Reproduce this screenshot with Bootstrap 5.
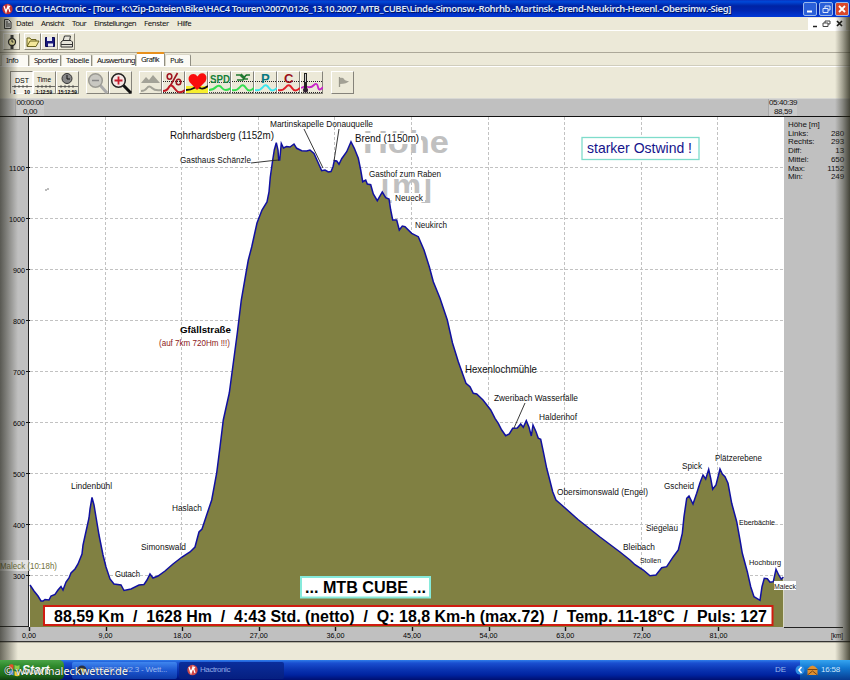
<!DOCTYPE html>
<html lang="de">
<head>
<meta charset="utf-8">
<title>CICLO HACtronic</title>
<link href="https://cdn.jsdelivr.net/npm/bootstrap@5.3.0/dist/css/bootstrap.min.css" rel="stylesheet">
<style>
body{width:850px;height:680px;overflow:hidden;background:#ece9d8;font:8px/1 "Liberation Sans",Arial,sans-serif;color:#111}
svg{display:block;flex:none}
.fit{white-space:nowrap;display:inline-block}
.titlebar{height:17px;background:linear-gradient(#0a35c0,#0048d8 10%,#0023a4 35%,#0026b0 60%,#0038d8);color:#dbe6f5;font-size:9.5px;padding:0 1px 0 2px}
.titlebar .fit{font-family:"Noto Sans","Liberation Sans",sans-serif;font-weight:600;text-shadow:1px 1px #001866}
.gap-title{margin-left:2px}
.wbtn{width:14px;height:14px;border:1px solid #9ab8ee;border-radius:2px;background:#2a5fd8}
.wclose{background:#d9482b}
.menubar{height:14px;border-bottom:1px solid #fff;padding:0 4px 0 4px}
.menubar,.tabs{font-family:"Noto Sans","Liberation Sans",sans-serif;font-size:7.8px}
.mdi{background:#fff;height:12px;width:38px}
.tools{height:22px;border-bottom:1px solid #aca899;padding:2px 2px 2px 3px}
.tbtn{width:17px;height:17px;border-right:1px solid #8d8a7c;border-bottom:1px solid #8d8a7c;border-left:1px solid #fff;border-top:1px solid #fff;flex:none}
.tabs{height:14px;border-bottom:1px solid #fff;box-shadow:inset 0 -1px #d0cdbd;padding-left:1px}
.tabx{background:#fbfaf4;border:1px solid #d8d5c5;border-right-color:#918f83;border-bottom:0;border-radius:2px 2px 0 0;height:12px;flex:none}
.tabx.active{height:14px;border-top:2px solid #e8901c;background:#fff}
.iconbar{height:31px;padding:4px 0 0 10px}
.gbtn{width:23px;height:23px;border-right:1px solid #85837a;border-bottom:1px solid #85837a;border-left:1px solid #fff;border-top:1px solid #fff;flex:none}
.gbtn.pressed{border-color:#85837a #fff #fff #85837a;background:#f6f4ec}
.gbtn.gapped{margin-left:7px}
.cursorbar{height:19px;background:#c0c0c0;border-bottom:1px solid #111;border-top:1px solid #d8d8d4;padding:0 53px 0 15px;line-height:8.5px}
.cellx{background:#cacaca;border-left:1px solid #aaa;width:29px;height:17px;text-align:center}
.plot{height:510px;background:#c0c0c0}
.plot>svg{overflow:visible;position:relative;z-index:1}
.stats{line-height:8.7px;padding:4px 6px 0 4px;font-size:8px;letter-spacing:-.1px}
.axisrow{height:15px;background:#c0c0c0;border-bottom:1px solid #333}
.rest{height:18px;border-top:1px solid #b5b2a3}
.taskbar{height:20px;background:linear-gradient(#2f7dea,#1a4fd0 15%,#0b36b4 45%,#0023a0 75%,#000f70);color:#9db9ec}
.start{width:64px;height:20px;background:linear-gradient(#4ba548,#2f8a2c 30%,#1e6b1c 75%,#103f10);border-radius:0 5px 5px 0;color:#fff;font-size:12px;font-style:italic;font-weight:bold}
.task{width:105px;height:17px;border-radius:2px;background:linear-gradient(#3f86ee,#1c56d0 50%,#0c3aa8)}
.task.cur{margin-left:2px;background:linear-gradient(#0a2e9c,#061f80);color:#8fa8e4}
.lang{margin-right:14px}
.tray{width:50px;height:20px;background:linear-gradient(#35a4f0,#1277d0 40%,#083c90);color:#cfe6fb}
.tray svg{margin-left:-5px}
.edgeL,.edgeR{top:17px;height:643px;pointer-events:none;z-index:3}
.edgeL{left:0;width:18px;background:linear-gradient(90deg,rgba(25,25,15,.62),rgba(50,50,40,.4) 45%,transparent)}
.edgeR{right:0;width:15px;background:linear-gradient(270deg,rgba(25,25,10,.75),rgba(50,50,35,.4) 50%,transparent)}
.copy{left:4px;bottom:3px;color:#fff;font:11px/1.1 "Noto Sans","Liberation Sans",sans-serif;z-index:4;text-shadow:0 0 1px #000}
</style>
<script src="https://cdn.jsdelivr.net/npm/bootstrap@5.3.0/dist/js/bootstrap.bundle.min.js"></script>
</head>
<body class="position-relative">
<header class="titlebar d-flex align-items-center">
  <svg width="11" height="12" viewBox="0 0 11 12"><circle cx="5.5" cy="6" r="5.2" fill="#c03030"/><path d="M2 3l2 6 2-6 2 6M3 8l5-5" stroke="#fff" fill="none" stroke-width="1.2"/></svg>
  <span class="fit gap-title me-auto" data-w="716">CICLO HACtronic - [Tour - K:\Zip-Dateien\Bike\HAC4 Touren\2007\0126_13.10.2007_MTB_CUBE\Linde-Simonsw.-Rohrhb.-Martinsk.-Brend-Neukirch-Hexenl.-Obersimw.-Sieg]</span>
  <div class="d-flex" style="gap:2px">
    <span class="wbtn"><svg width="12" height="12"><path d="M3 8.500h5" stroke="#fff" stroke-width="2"/></svg></span>
    <span class="wbtn"><svg width="12" height="12"><path d="M5 5V3h5v4H8M3 5.500h5v4H3z" stroke="#dfe8fa" fill="none"/></svg></span>
    <span class="wbtn wclose"><svg width="12" height="12"><path d="M3 3l6 6M9 3l-6 6" stroke="#fff" stroke-width="1.800"/></svg></span>
  </div>
</header>
<nav class="menubar d-flex align-items-center">
  <svg width="8" height="10" viewBox="0 0 8 10" class="me-1"><path d="M.5.5h4l2.500 2.500v6.500H.500zM2 3h2M2 5h4M2 7h4" stroke="#333" fill="#eee"/></svg>
  <div class="d-flex gap-2 me-auto">
    <span class="fit" data-w="17">Datei</span><span class="fit" data-w="23">Ansicht</span><span class="fit" data-w="14">Tour</span><span class="fit" data-w="42">Einstellungen</span><span class="fit" data-w="25">Fenster</span><span class="fit" data-w="14">Hilfe</span>
  </div>
  <div class="mdi"><svg width="38" height="12"><path d="M5 8.500h4" stroke="#222" stroke-width="1.500"/><path d="M17 5V3h5v3h-2M15 5h5v3.500h-5z" stroke="#444" fill="none"/><path d="M29 3l5 5M34 3l-5 5" stroke="#111" stroke-width="1.700"/></svg></div>
</nav>
<div class="tools d-flex">
  <span class="tbtn"><svg width="16" height="16"><path d="M8 1v14" stroke="#333" stroke-width="3"/><circle cx="8" cy="8" r="3.500" fill="#f0e9a0" stroke="#222" stroke-width="1.300"/><path d="M8 6v2h1.500" stroke="#222" fill="none"/></svg></span>
  <span class="tbtn ms-1"><svg width="16" height="16"><path d="M2 12V4h3l1 1.500h5V7M2 12.500L5 7h9l-3 5.500z" fill="#f3e79a" stroke="#6b6420"/></svg></span>
  <span class="tbtn"><svg width="16" height="16"><path d="M3.500 3.500h9v9h-9z" fill="#1a1a7c" stroke="#0a0a50"/><path d="M5 3h5v4H5zM6 9.500h5v3H6z" fill="#e9e9f2"/></svg></span>
  <span class="tbtn"><svg width="16" height="16"><path d="M4 7l1.500-5h6L10.500 7M2 8l2-1.500h8l1.500 1.500v5H2zM2 10.500h11" fill="#e6e4da" stroke="#333"/></svg></span>
</div>
<div class="tabs d-flex align-items-end" id="tabs"></div>
<div class="iconbar d-flex" id="iconbar">
  <span class="gbtn pressed"><svg width="22" height="22"><text x="4" y="11" font-size="8" textLength="14" lengthAdjust="spacingAndGlyphs">DST</text><path d="M1 14.500h20M4 13v3M8 13v3M12 13v3M16 13v3" stroke="#333" stroke-width=".7"/><text x="2" y="21.500" font-size="5.500" font-weight="bold">1</text><text x="13" y="21.500" font-size="5.500" font-weight="bold">10</text></svg></span>
  <span class="gbtn"><svg width="22" height="22"><text x="3" y="10" font-size="8" textLength="14" lengthAdjust="spacingAndGlyphs">Time</text><path d="M1 14.500h20M4 13v3M8 13v3M12 13v3M16 13v3" stroke="#333" stroke-width=".7"/><text x="2" y="21.500" font-size="5.800" font-weight="bold" textLength="16" lengthAdjust="spacingAndGlyphs">1:12:59</text></svg></span>
  <span class="gbtn"><svg width="22" height="22"><circle cx="10" cy="6.500" r="5" fill="#888" stroke="#333"/><path d="M10 3v4h3" stroke="#111" fill="none"/><path d="M1 14.500h20M4 13v3M8 13v3M12 13v3M16 13v3" stroke="#333" stroke-width=".7"/><text x="1" y="21.500" font-size="5.800" font-weight="bold" textLength="19" lengthAdjust="spacingAndGlyphs">15:12:59</text></svg></span>
  <span class="gbtn gapped"><svg width="22" height="22"><path d="M13 13l7 8" stroke="#aaa" stroke-width="3"/><circle cx="8.500" cy="8.500" r="6.800" fill="#c9c8c2" stroke="#9c9b94" stroke-width="1.500"/><path d="M5 8.500h7" stroke="#888" stroke-width="1.500"/></svg></span>
  <span class="gbtn"><svg width="22" height="22"><path d="M13 13l8 8" stroke="#111" stroke-width="3"/><circle cx="8.500" cy="8.500" r="6.800" fill="#f4e7e4" stroke="#222" stroke-width="1.500"/><path d="M4.500 8.500h8M8.500 4.500v8" stroke="#c41d2c" stroke-width="1.800"/></svg></span>
  <span class="gbtn gapped"><svg width="22" height="22"><path d="M1 11l5-6 3 3 4-5 7 8z" fill="#a3a297"/><path d="M1 19q4 0 6-3t5 0 9 2" stroke="#a3a297" fill="none" stroke-width="2"/></svg></span>
  <span class="gbtn"><svg width="22" height="22"><path d="M0 9.500h22M0 20.500h22" stroke="#222" stroke-dasharray="1 1"/><path d="M14.500 1L7.500 13.500" stroke="#a01420" stroke-width="1.600"/><ellipse cx="6.500" cy="4.500" rx="2.300" ry="2.800" fill="none" stroke="#a01420" stroke-width="1.600"/><ellipse cx="15.500" cy="10" rx="2.300" ry="2.800" fill="none" stroke="#a01420" stroke-width="1.600"/><path d="M0 19q4 0 6-4t6 2 10 1" stroke="#c01825" fill="none" stroke-width="2"/></svg></span>
  <span class="gbtn"><svg width="22" height="22"><path d="M0 14h22v7H0z" fill="#f7ee2d"/><path d="M0 18q5 0 8-2t6 0 8-2" stroke="#111" fill="none" stroke-width="1.800"/><path d="M11 18L3.500 10Q1 5 5 2.500q4-1.500 6.500 2Q14 0 18 1.500q4 2.500 1.500 8z" fill="#fa0c0c"/></svg></span>
  <span class="gbtn"><svg width="22" height="22"><path d="M0 10.500h22M0 20.500h22" stroke="#444" stroke-dasharray="1 1"/><text x="1" y="10.500" font-size="10.500" font-weight="bold" fill="#16803a" textLength="20" lengthAdjust="spacingAndGlyphs">SPD</text><path d="M0 18q4 0 7-3t6 1 9 0" stroke="#35dd50" fill="none" stroke-width="2"/></svg></span>
  <span class="gbtn"><svg width="22" height="22"><path d="M0 9.500h22M0 20.500h22" stroke="#222" stroke-dasharray="1 1"/><path d="M4 3h4l4 4M9 2l4 4M14 3l-3 5h-6M14 3h4M12 7h4" stroke="#207830" fill="none" stroke-width="1.500"/><path d="M0 18q5 1 8-3t6 1 8 0" stroke="#35dd50" fill="none" stroke-width="2"/></svg></span>
  <span class="gbtn"><svg width="22" height="22"><path d="M0 9.500h22M0 20.500h22" stroke="#222" stroke-dasharray="1 1"/><text x="6" y="11" font-size="13" font-weight="bold" fill="#087880">P</text><path d="M0 18q5 1 8-3t6 1 8 0" stroke="#3ce6ee" fill="none" stroke-width="2"/></svg></span>
  <span class="gbtn"><svg width="22" height="22"><path d="M0 9.500h22M0 20.500h22" stroke="#222" stroke-dasharray="1 1"/><text x="6" y="11" font-size="13" font-weight="bold" fill="#991018">C</text><path d="M0 18q5 1 8-3t6 1 8 0" stroke="#e02028" fill="none" stroke-width="2"/></svg></span>
  <span class="gbtn"><svg width="22" height="22"><path d="M0 9.500h22M0 20.500h22" stroke="#222" stroke-dasharray="1 1"/><path d="M0 16q4-2 7-1t6-2 4 2 5 0" stroke="#c822c8" fill="none" stroke-width="1.800"/><path d="M4.500 1v19" stroke="#222" stroke-width="3"/><path d="M4.500 2v8" stroke="#ccc"/><circle cx="4.500" cy="18" r="2.500" fill="#302030"/></svg></span>
  <span class="gbtn ms-2"><svg width="22" height="22"><path d="M7.500 5v10" stroke="#99978b" stroke-width="1.300"/><path d="M8 6q3-1 4 1t5 2q-2 3-9 3z" fill="#a3a195"/></svg></span>
</div>
<div class="cursorbar d-flex justify-content-between">
  <div class="cellx"><span class="fit" data-w="27">00:00:00</span><br><span class="fit" data-w="14">0,00</span></div>
  <div class="cellx"><span class="fit" data-w="28">05:40:39</span><br><span class="fit" data-w="18">88,59</span></div>
</div>
<main class="plot d-flex">
  <svg id="chart" width="784" height="510" viewBox="0 117 784 510"></svg>
  <aside class="stats flex-fill">
    <div>Höhe [m]</div>
    <div class="d-flex justify-content-between"><span>Links:</span><span>280</span></div>
    <div class="d-flex justify-content-between"><span>Rechts:</span><span>293</span></div>
    <div class="d-flex justify-content-between"><span>Diff:</span><span>13</span></div>
    <div class="d-flex justify-content-between"><span>Mittel:</span><span>650</span></div>
    <div class="d-flex justify-content-between"><span>Max:</span><span>1152</span></div>
    <div class="d-flex justify-content-between"><span>Min:</span><span>249</span></div>
  </aside>
</main>
<div class="axisrow"><svg id="xaxis" width="850" height="14" viewBox="0 627 850 14"></svg></div>
<div class="rest"></div>
<footer class="taskbar d-flex align-items-center">
  <div class="start d-flex align-items-center"><svg width="22" height="16"><path d="M9 3q3-1.500 4.500 0v4.500q-2-1.500-4.500 0z" fill="#e8502c"/><path d="M14.500 3q3 1.500 5 0v4.500q-2 1.500-5 0z" fill="#8cd04a"/><path d="M9 9q3-1.500 4.500 0v4.500q-2-1.500-4.500 0z" fill="#5b9af0"/><path d="M14.500 9q3 1.500 5 0v4.500q-2 1.500-5 0z" fill="#f4d23c"/></svg><span>Start</span></div>
  <div class="task ms-2 d-flex align-items-center ps-1"><svg width="12" height="12"><circle cx="6" cy="6" r="4.500" fill="#2a3142"/><path d="M4 4l5 1-2 4z" fill="#f0d850"/></svg><span class="fit ms-1" data-w="75">WS2500 V2.3 - Wett...</span></div>
  <div class="task cur d-flex align-items-center ps-2"><svg width="11" height="12" viewBox="0 0 11 12"><circle cx="5.500" cy="6" r="5.200" fill="#d04848"/><path d="M2 3l2 6 2-6 2 6M3 8l5-5" stroke="#fff" fill="none" stroke-width="1.200"/></svg><span class="fit gap-title" data-w="30">Hactronic</span></div>
  <span class="lang ms-auto">DE</span>
  <div class="tray d-flex align-items-center"><svg width="26" height="18"><circle cx="5" cy="9" r="4.500" fill="#2f8ee4"/><path d="M6.500 6L4 9l2.500 3" stroke="#fff" fill="none" stroke-width="1.500"/><path d="M12.500 14V8q5-7 10 0v6z" fill="#e09030"/><path d="M12.500 8.500h10M12.500 14l5-4 5 4" stroke="#7a4510" fill="none"/></svg><span class="fit" data-w="19">16:58</span></div>
</footer>
<div class="edgeL position-absolute"></div>
<div class="edgeR position-absolute"></div>
<div class="copy position-absolute"><span class="fit" data-w="124">© www.maleckwetter.de</span></div>
<script>
// Tab strip: label, tab width, label width
document.getElementById('tabs').innerHTML = [['Info',28,12],['Sportler',32,24],['Tabelle',31,23],['Auswertung',44,38],['Grafik',29,18],['Puls',26,13]]
  .map(([t,w,l]) => `<div class="tabx d-flex align-items-center ps-1${t==='Grafik'?' active':''}" style="width:${w}px"><span class="fit" data-w="${l}">${t}</span></div>`).join('');

// Elevation profile
const P = `30,585 34,591 38,596 41,601 43,601 45,599.5 49,600 51,596 55,594.5 58,590 61,586.5 63,590 66,582 69,578 71,573 75,569 78,564 82,554 83,545 85,536 87,527 89,518 90,509 92,497.5 94,505 96,517 99,535 103,555 106,567 110,579 114,584 121,585 124,590.5 131,589 139,585 144,584.5 147,580 150,574 153,578 158,576 165,571 173,564 182,557 190,552 195,547 199,532 202,529 206,517 211.7,500 216.7,473 220,447 223.3,420 229.3,393 233.3,363 237.3,333 241.3,300 246,273 248.3,260 251.7,247 255,232 257,223 262,210 267,202 269,192 270.3,177 272.7,160 274.3,150 276.3,142.7 278,150 278.7,160 279.7,160 281.3,143.5 283.5,148 286.5,146.5 290,147 294,144 296.7,148.3 301.7,150.7 306.7,151 310,150 314,153.5 317.7,161.7 321.7,170.7 325,170 328.3,172 331,171.5 333,166.7 334.3,160.7 336.7,161 339,164.3 341.7,158.7 346.7,151.7 351,141.7 354.3,148.3 358.3,158.3 360.7,170 362.7,181.7 365.7,180 367.3,184 370.7,184.7 373.3,194 377.3,200.7 382.3,192 385.7,197.7 389,199 390.7,210 392.7,220 396.7,220 399.3,230 402.3,226 405,226.7 411.7,233.3 418.3,236.7 424,250 429.3,266.7 433.3,281.7 440,298.3 447.3,320 452.5,343 458.3,361.7 466,383.3 470,386.7 473.3,393.3 476.7,394 483,400 490.7,410 495,418.3 498.3,423.3 501.7,430 505.7,435.7 509.3,434 512.7,428.3 517.3,428 520.7,424 523.3,427.3 526.3,420.7 529,427.3 531.3,436 533,425 536,431.7 538.3,438.3 540.7,439.3 543.3,451.7 546.7,468.3 549.3,478.3 552.7,491.7 556,500 561.7,505 578,519.5 600,537 620,552 630,560 635,564.7 643.3,570 650,575.7 656,575 661.7,567.7 666.7,566.7 673.3,556.7 678.3,550 682.3,533.3 684,516.7 686.7,498.3 689,496 693,504 696.7,493.3 700,482.7 703,475 705.7,479 708.7,469.3 710.7,478.3 712.7,489.3 716,485 720,469 722.3,474 725,476.7 728,483.3 731.7,503.3 736.7,521.7 740,540 742.3,553.3 747.3,571.7 750.7,586.7 754,596.7 760,600.3 762,586.7 764.3,578.3 767.3,578.7 770,582.3 773.3,581.7 776,569.3 778.7,575 781.3,579.3 783.3,577`;
const text = (t,x,y,w,s,a='') => `<text x="${x}" y="${y}" font-size="${s}" textLength="${w}" lengthAdjust="spacingAndGlyphs" xml:space="preserve" ${a}>${t}</text>`;
let g = '<rect x="29" y="117" width="755" height="510" fill="#fff"/>';
g += text('Höhe',363,153,86,32,'font-weight="bold" fill="#c0c0c0"') + text('[m]',381,196,51,31,'font-weight="bold" fill="#c0c0c0"');
for (let i=0;i<9;i++) g += `<path d="M30 ${168+i*51-.5}H784" stroke="#c2c2c2" stroke-dasharray="3 2"/>`;
for (let i=1;i<10;i++) g += `<path d="M${Math.round(29+i*76.6)+.5-1} 117V627" stroke="#c2c2c2" stroke-dasharray="3 2"/>`;
g += `<path d="M30 627L${P.replace(/ /g,'L')}V627z" fill="#808042"/><polyline points="${P}" fill="none" stroke="#1010a0" stroke-width="1.5"/>`;
g += '<path d="M28.500 117V627M0 626.500H29" stroke="#222" fill="none"/>';
for (let i=0;i<9;i++) { const v=1100-i*100, y=168+i*51; g += `<path d="M26 ${y-.5}h4" stroke="#111"/>` + text(v,v>999?9:13,y+2.5,v>999?16:12,7.5); }
g += '<path d="M304 129L323 168M339 129L334 161M251 163L273 160.500L279 160M525 403L514 428" stroke="#222" stroke-width=".9" fill="none"/>';
g += '<rect x="0" y="560" width="58" height="11" fill="#fff" opacity=".55"/><rect x="355" y="133" width="66" height="11" fill="#fff"/><rect x="368" y="169" width="73" height="10" fill="#fff"/><rect x="394" y="193" width="31" height="9" fill="#fff"/><rect x="774" y="581" width="22" height="9" fill="#fff"/>';
g += [['Rohrhardsberg (1152m)',170,139,104,10.3],['Martinskapelle Donauquelle',270,127,103,8.3],['Gasthaus Schänzle',180,163,71,8.3],['Brend (1150m)',355,142,64,10.3],['Gasthof zum Raben',369,177,72,8.3],['Neueck',395,201,28,8.3],['Neukirch',415,228,32,8.3],['Hexenlochmühle',465,373,72,10.3],['Zweribach Wasserfälle',494,401,84,8.3],['Haldenhof',539,420,38,8.5],['Obersimonswald (Engel)',557,495,91,8.5],['Spick',682,469,20,8.3],['Plätzerebene',715,461,47,8.3],['Gscheid',664,489,30,8.3],['Siegelau',646,531,32,8.3],['Bleibach',623,550,32,8.3],['Stollen',640,563,21,8],['Eberbächle',739,525,36,8],['Hochburg',749,565,32,8],['Maleck',774,588.500,22,8],['Lindenbühl',71,489,41,8.3],['Haslach',172,511,30,8.3],['Simonswald',141,550,45,8.3],['Gutach',115,577,25,8.3]].map(a => text(...a,'fill="#111"')).join('');
g += text('Maleck (10:18h)',0,568.500,57,8.5,'fill="#70703a"') + text('Gfällstraße',180,333,51,9.5,'font-weight="bold"') + text('(auf 7km 720Hm !!!)',159,346,71,8.3,'fill="#8c2020"');
g += '<path d="M45 190h2M47 189h2" stroke="#555" stroke-width=".8"/>';
g += '<rect x="582" y="137.500" width="117" height="22" fill="#fff" stroke="#7fdccb" stroke-width="1.300"/>' + text('starker Ostwind !',587,153,105,14.2,'fill="#14148c"');
g += '<rect x="301" y="577" width="129" height="20.500" fill="#fff" stroke="#86eadb" stroke-width="2"/>' + text('... MTB CUBE ...',305,592.5,121,16,'font-weight="bold"');
g += '<rect x="44" y="606" width="728.500" height="19" fill="#fff" stroke="#d01c10" stroke-width="2"/>' + text('88,59 Km  /  1628 Hm  /  4:43 Std. (netto)  /  Q: 18,8 Km-h (max.72)  /  Temp. 11-18°C  /  Puls: 127',54,622,713,16,'font-weight="bold"');
document.getElementById('chart').innerHTML = g;

// Distance axis
let x = '<path d="M784 627.500H843" stroke="#222"/>';
['0,00','9,00','18,00','27,00','36,00','45,00','54,00','63,00','72,00','81,00'].forEach((t,i) => {
  const c = 29+i*76.6, w = i<2?14:18;
  x += `<path d="M${Math.round(c)+.5} 627v4" stroke="#111" stroke-width="1.400"/>` + text(t,c-w/2,638,w,7.5);
});
document.getElementById('xaxis').innerHTML = x + text('[km]',831,638,12,7.5);

// Spread each label to its set width
document.querySelectorAll('.fit[data-w]').forEach(e => {
  e.style.letterSpacing = (e.dataset.w - e.getBoundingClientRect().width) / e.textContent.length + 'px';
});
</script>
</body>
</html>
